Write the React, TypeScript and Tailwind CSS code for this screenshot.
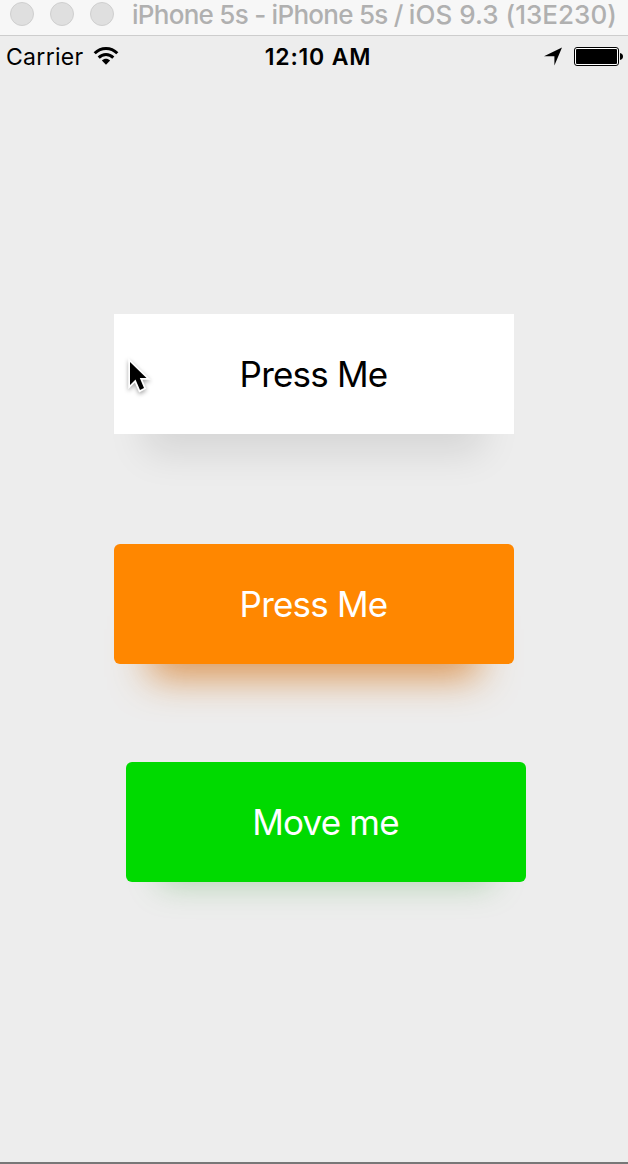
const lights = ['close', 'minimize', 'zoom'];

function TitleBar() {
  return (
    <header className="flex h-9 shrink-0 items-start border-b border-[#cdcdcd] bg-[#f7f7f7] pl-[10px]">
      <div className="mt-[2px] flex gap-4">
        {lights.map((name) => (
          <span key={name} className="size-6 rounded-full border border-[#cfcfcf] bg-[#dfdfdf]" />
        ))}
      </div>
      <h1 className="ml-[18px] whitespace-nowrap text-[26px] leading-[30px] font-medium tracking-[-0.73px] text-[#b0b0b0]">
        iPhone 5s - iPhone 5s / <span className="tracking-[0.04px]">iOS 9.3 (13E230)</span>
      </h1>
    </header>
  );
}

function StatusBar() {
  return (
    <div className="grid h-10 shrink-0 grid-cols-3 items-start pr-[4px] pl-[6px] text-black">
      <div className="flex h-10 items-center gap-[9px]">
        <span className="pt-[2px] text-[23px] leading-10 tracking-[0.3px]">Carrier</span>
        <svg width="26" height="20" viewBox="0 0 26 20" fill="none" stroke="#000" strokeWidth="3">
          <path d="M1.7 7.3C8.2.8 17.8.8 24.3 7.3" />
          <path d="M5.7 11.6c4.2-4.1 10.4-4.1 14.6 0" />
          <path d="M13 18.7 8.9 14.4c2.4-2.1 5.8-2.1 8.2 0Z" fill="#000" stroke="none" />
        </svg>
      </div>
      <span className="whitespace-nowrap pt-px pl-[6px] text-center text-[23px] leading-10 font-semibold tracking-[0.8px]">12:10 AM</span>
      <div className="flex h-10 items-center justify-end gap-[11px]">
        <svg width="20" height="20" viewBox="0 0 20 20">
          <path d="M19 1.500 11.4 19.500v-9.2H1Z" fill="#000" />
        </svg>
        <svg width="50" height="20" viewBox="0 0 50 20">
          <rect x=".5" y="1.5" width="44" height="18" rx="2.5" fill="#fff" stroke="#000" />
          <rect x="2" y="3" width="41" height="15" rx="1" fill="#000" />
          <path d="M46 7c4 .5 4 6.500 0 7Z" fill="#000" />
        </svg>
      </div>
    </div>
  );
}

function Pointer() {
  return (
    <svg
      className="absolute top-[44px] left-[11px] drop-shadow-[0_2px_2px_rgba(0,0,0,0.35)]"
      width="28"
      height="38"
      viewBox="0 0 28 38"
    >
      <path
        d="M5 4v23l5.500-5.500 4.500 10.500 4-2-4.200-10h6.700Z"
        fill="#000"
        stroke="#fff"
        strokeWidth="3.500"
        paintOrder="stroke"
      />
    </svg>
  );
}

const button = 'relative h-[120px] w-[400px] pr-px text-[35px] leading-[120px] font-normal tracking-[-0.8px]';

export default function App() {
  return (
    <div className="flex h-[1164px] w-[628px] flex-col overflow-hidden border-b-2 border-[#777] bg-[#ededed] font-['Inter','Liberation_Sans',sans-serif]">
      <TitleBar />
      <StatusBar />
      <main className="flex flex-col items-start pt-[238px] pl-[114px]">
        <button className={`${button} bg-white text-black shadow-[0_50px_38px_-31px_rgba(0,0,0,0.1)]`}>
          Press Me
          <Pointer />
        </button>
        <button className={`${button} mt-[110px] rounded-md bg-[#ff8700] text-white shadow-[0_49px_38px_-36px_rgba(215,125,40,0.8)]`}>
          Press Me
        </button>
        <button className={`${button} mt-[98px] ml-3 rounded-md bg-[#00da00] text-white shadow-[0_36px_32px_-34px_rgba(80,170,80,0.4)]`}>
          Move me
        </button>
      </main>
    </div>
  );
}
